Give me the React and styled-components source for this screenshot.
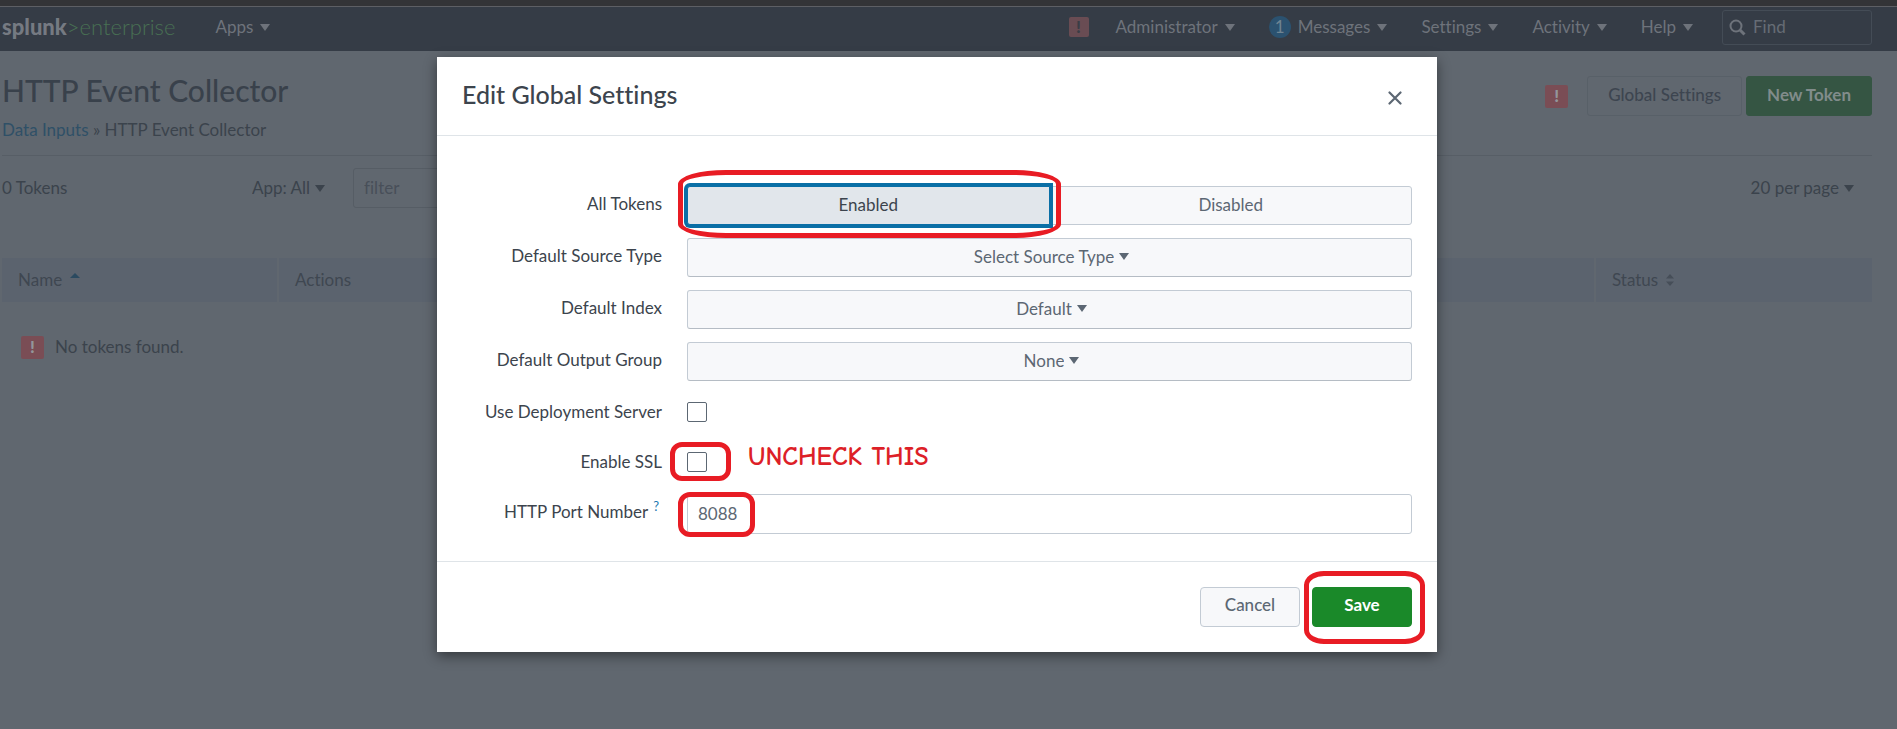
import React, { useState } from 'react';
import styled, { createGlobalStyle, css } from 'styled-components';

const GlobalStyle = createGlobalStyle`
  *, *::before, *::after { box-sizing: border-box; }
  html { background: #60676f; }
  body { margin: 0; }
  body, button, input, select {
    font-family: Lato, "Open Sans", "Liberation Sans", sans-serif;
    font-size: 17px;
    font-variant-ligatures: none;
    line-height: 24px;
  }
  button, select { cursor: pointer; }
`;

const Page = styled.div`
  position: relative;
  min-height: 100vh;
  color: #3b434c;
  background: #60676f;
`;

/* ---------- shared small parts ---------- */

const CaretSvg = styled.svg`
  display: block;
  flex: none;
  width: 10px;
  height: 7px;
  fill: currentColor;
  pointer-events: none;
`;

const Caret = () => (
  <CaretSvg viewBox="0 0 10 7" aria-hidden="true">
    <path d="M0 0h10L5 7z" />
  </CaretSvg>
);

const AlertIcon = styled.span`
  display: inline-flex;
  flex: none;
  align-items: center;
  justify-content: center;
  width: ${(p) => (p.$dim ? 20 : 23)}px;
  height: ${(p) => (p.$dim ? 20 : 23)}px;
  border-radius: 2px;
  font-size: 17px;
  font-weight: 900;
  color: ${(p) => (p.$dim ? '#3a3d46' : '#93969b')};
  background: ${(p) => (p.$dim ? '#694c53' : '#7a4d55')};
`;

const SelectBox = styled.label`
  display: flex;
  align-items: center;
  justify-content: center;
  gap: 5px;
  ${(p) =>
    p.$boxed &&
    css`
      height: 39px;
      padding: 0 0 2px 4px;
      border: 1px solid #c3cbd4;
      border-bottom-color: #b5bcc4;
      border-radius: 3px;
      color: #5c6773;
      background: #f7f8fa;
    `}
`;

const BareSelect = styled.select`
  appearance: none;
  field-sizing: content;
  padding: 0;
  border: 0;
  outline: 0;
  color: inherit;
  background: transparent;
`;

function Dropdown({ id, label, value, boxed }) {
  return (
    <SelectBox htmlFor={id} $boxed={boxed}>
      <BareSelect id={id} aria-label={label} defaultValue={value}>
        <option>{value}</option>
      </BareSelect>
      <Caret />
    </SelectBox>
  );
}

/* ---------- top navigation ---------- */

const TopStrip = styled.div`
  height: 7px;
  border-bottom: 1px solid #5d5f64;
  background: #333437;
`;

const NavBar = styled.nav`
  display: flex;
  align-items: center;
  justify-content: space-between;
  height: 44px;
  padding: 0 25px 4px 2px;
  color: #6e737b;
  background: #353c46;
`;

const NavGroup = styled.div`
  display: flex;
  align-items: center;
  gap: ${(p) => p.$gap}px;
`;

const Logo = styled.a`
  font-size: 22px;
  font-weight: 300;
  line-height: 28px;
  text-decoration: none;
  color: #487053;
`;

const LogoName = styled.span`
  font-weight: 900;
  color: #757a82;
`;

const NavButton = styled.button`
  display: flex;
  align-items: center;
  gap: 7px;
  padding: 0;
  border: 0;
  color: inherit;
  background: none;
`;

const CountBadge = styled.span`
  width: 22px;
  height: 22px;
  border-radius: 50%;
  line-height: 22px;
  text-align: center;
  color: #6f8492;
  background: #2b5270;
`;

const FindBox = styled.label`
  display: flex;
  align-items: center;
  gap: 7px;
  width: 150px;
  height: 35px;
  margin-left: -5px;
  padding: 0 6px;
  border: 1px solid #444c56;
  border-radius: 3px;
`;

const FindInput = styled.input`
  flex: 1;
  min-width: 0;
  padding: 0;
  border: 0;
  outline: 0;
  color: inherit;
  background: none;
  &::placeholder { color: #666c75; opacity: 1; }
`;

const SearchIcon = () => (
  <svg width="17" height="17" viewBox="0 0 17 17" fill="none" stroke="currentColor" aria-hidden="true">
    <circle cx="7" cy="7" r="5.5" strokeWidth="2" />
    <path d="M11 11l4.5 4.5" strokeWidth="3" />
  </svg>
);

const NavMenu = ({ children }) => (
  <NavButton type="button" aria-haspopup="menu">
    {children}
    <Caret />
  </NavButton>
);

/* ---------- page behind the dialog ---------- */

const Main = styled.main`
  padding: 25px 25px 0 2px;
`;

const PageHeader = styled.header`
  display: flex;
  align-items: flex-start;
  justify-content: space-between;
  height: 80px;
  border-bottom: 1px solid #575e66;
`;

const PageTitle = styled.h1`
  margin: -4px 0 10px;
  font-size: 30px;
  font-weight: 500;
  line-height: 36px;
  color: #39414b;
`;

const Breadcrumb = styled.div`
  a { color: #2f5067; text-decoration: none; }
`;

const HeaderActions = styled.div`
  display: flex;
  align-items: center;
  gap: 4px;
`;

const AlertSlot = styled.span`
  display: flex;
  padding-right: 15px;
`;

const PageButton = styled.button`
  height: 40px;
  padding: 0 20px 2px;
  border: 1px solid ${(p) => (p.$primary ? '#355543' : '#586068')};
  border-radius: 3px;
  font-weight: ${(p) => (p.$primary ? 700 : 500)};
  color: ${(p) => (p.$primary ? '#818c8b' : '#3d4550')};
  background: ${(p) => (p.$primary ? '#355543' : 'transparent')};
`;

const Toolbar = styled.div`
  display: flex;
  align-items: center;
  padding: 12px 18px 50px 0;
`;

const TokenCount = styled.span`
  width: 250px;
`;

const FilterInput = styled.input`
  width: 250px;
  height: 40px;
  margin: 0 auto 0 28px;
  padding: 0 10px 2px;
  border: 1px solid #565d65;
  border-radius: 3px;
  color: inherit;
  background: transparent;
  &::placeholder { color: #484f59; opacity: 1; }
`;

const TokenTable = styled.table`
  width: 100%;
  table-layout: fixed;
  border-collapse: collapse;
`;

const HeadCell = styled.th`
  width: ${(p) => (p.$width ? `${p.$width}px` : 'auto')};
  height: 44px;
  padding: 0 16px;
  border-left: 2px solid #60676f;
  font-weight: 400;
  text-align: left;
  color: #3f4751;
  background: #5b636e;
  &:first-child { border-left: 0; }
`;

const HeadLabel = styled.span`
  display: flex;
  align-items: center;
  gap: 8px;
`;

const EmptyCell = styled.td`
  height: 90px;
  padding: 0 19px;
`;

const EmptyMessage = styled.span`
  display: flex;
  align-items: center;
  gap: 11px;
`;

const SortedIcon = () => (
  <svg width="10" height="18" viewBox="0 0 10 18" fill="#2b4a60" aria-hidden="true">
    <path d="M0 7L5 2l5 5z" />
  </svg>
);

const SortableIcon = () => (
  <svg width="8" height="12" viewBox="0 0 8 12" fill="#464e58" aria-hidden="true">
    <path d="M0 4.5L4 0l4 4.5zM0 7.500h8L4 12z" />
  </svg>
);

/* ---------- dialog ---------- */

const Overlay = styled.div`
  position: absolute;
  inset: 0;
  padding: 57px 23px 0 0;
`;

const Dialog = styled.section`
  width: 100%;
  max-width: 1000px;
  margin: 0 auto;
  color: #3c444d;
  background: #fff;
  box-shadow: 0 4px 12px rgba(0, 0, 0, 0.45);
`;

const DialogHeader = styled.header`
  display: flex;
  align-items: center;
  justify-content: space-between;
  height: 79px;
  padding: 0 35px 4px 25px;
  border-bottom: 1px solid #dfe4e8;
`;

const DialogTitle = styled.h2`
  margin: 0;
  font-size: 25px;
  font-weight: 500;
  line-height: 32px;
`;

const CloseButton = styled.button`
  display: flex;
  margin-top: 7px;
  padding: 0;
  border: 0;
  color: #5c6773;
  background: none;
`;

const DialogBody = styled.div`
  display: flex;
  flex-direction: column;
  gap: 13px;
  padding: 50px 25px 27px;
`;

const Field = styled.div`
  display: grid;
  grid-template-columns: 200px 1fr;
  column-gap: 25px;
`;

const FieldLabel = styled.label`
  line-height: 35px;
  text-align: right;
`;

const HelpLink = styled.a`
  margin: 0 3px 0 5px;
  font-size: 13px;
  line-height: 1;
  vertical-align: super;
  text-decoration: none;
  color: #1e78b0;
`;

const ToggleGroup = styled.div`
  display: grid;
  grid-template-columns: 1fr 1fr;
`;

const ToggleButton = styled.button`
  width: 100%;
  height: 39px;
  padding: 0 0 2px;
  border: 1px solid #c3cbd4;
  color: #5c6773;
  background: #f7f8fa;
  border-radius: 0 3px 3px 0;
  ${(p) =>
    p.$active &&
    css`
      border-color: #0a6fa6;
      border-radius: 3px 0 0 3px;
      color: #3c444d;
      background: #e1e6eb;
      box-shadow: 0 0 0 3px #0a6fa6;
    `}
`;

const CheckRow = styled.div`
  display: flex;
  align-items: center;
  gap: 41px;
  height: 37px;
  padding-bottom: 1px;
`;

const Checkbox = styled.input`
  appearance: none;
  display: block;
  width: 20px;
  height: 20px;
  margin: 0;
  border: 1px solid #5c6773;
  border-radius: 2px;
  background: ${(p) => (p.checked ? '#5c6773' : '#fff')};
`;

const PortInput = styled.input`
  display: block;
  width: 100%;
  height: 40px;
  padding: 0 10px 2px;
  border: 1px solid #c3cbd4;
  border-radius: 3px;
  color: #5c6773;
  background: #fff;
`;

const DialogFooter = styled.footer`
  display: flex;
  justify-content: flex-end;
  gap: 12px;
  padding: 25px;
  border-top: 1px solid #dfe4e8;
`;

const DialogButton = styled.button`
  width: 100px;
  height: 40px;
  padding: 0 0 4px;
  border: 1px solid ${(p) => (p.$primary ? '#1a8929' : '#c3cbd4')};
  border-radius: 4px;
  font-weight: ${(p) => (p.$primary ? 700 : 500)};
  color: ${(p) => (p.$primary ? '#fff' : '#5c6773')};
  background: ${(p) => (p.$primary ? '#1a8929' : '#f7f8fa')};
`;

/* ---------- red mark-up over the dialog ---------- */

const Marked = styled.div`
  position: relative;
`;

const Ring = styled.span`
  position: absolute;
  z-index: 1;
  inset: ${(p) => p.$inset};
  width: ${(p) => p.$width || 'auto'};
  border: 5px solid #e81c24;
  border-radius: ${(p) => p.$radius || '12px'};
  pointer-events: none;
`;

const Note = styled.strong`
  padding-bottom: 10px;
  font-family: "Comic Sans MS", "Comic Neue", Lato, sans-serif;
  font-size: 26px;
  font-weight: 700;
  line-height: 28px;
  color: #dd1f28;
`;

export default function App() {
  const [enabled, setEnabled] = useState(true);
  const [deployment, setDeployment] = useState(false);
  const [ssl, setSsl] = useState(false);

  return (
    <Page>
      <GlobalStyle />
      <TopStrip />
      <NavBar>
        <NavGroup $gap={40}>
          <Logo href="#home">
            <LogoName>splunk</LogoName>&gt;enterprise
          </Logo>
          <NavMenu>Apps</NavMenu>
        </NavGroup>
        <NavGroup $gap={34}>
          <NavGroup $gap={27}>
            <AlertIcon $dim>!</AlertIcon>
            <NavMenu>Administrator</NavMenu>
          </NavGroup>
          <NavMenu>
            <CountBadge>1</CountBadge>
            Messages
          </NavMenu>
          <NavMenu>Settings</NavMenu>
          <NavMenu>Activity</NavMenu>
          <NavMenu>Help</NavMenu>
          <FindBox>
            <SearchIcon />
            <FindInput type="search" placeholder="Find" aria-label="Find" />
          </FindBox>
        </NavGroup>
      </NavBar>

      <Main>
        <PageHeader>
          <div>
            <PageTitle>HTTP Event Collector</PageTitle>
            <Breadcrumb>
              <a href="#inputs">Data Inputs</a> » HTTP Event Collector
            </Breadcrumb>
          </div>
          <HeaderActions>
            <AlertSlot>
              <AlertIcon>!</AlertIcon>
            </AlertSlot>
            <PageButton type="button">Global Settings</PageButton>
            <PageButton type="button" $primary>New Token</PageButton>
          </HeaderActions>
        </PageHeader>

        <Toolbar>
          <TokenCount>0 Tokens</TokenCount>
          <Dropdown id="app" label="App" value="App: All" />
          <FilterInput placeholder="filter" aria-label="filter" />
          <Dropdown id="per-page" label="Rows per page" value="20 per page" />
        </Toolbar>

        <TokenTable>
          <thead>
            <tr>
              <HeadCell $width={276}>
                <HeadLabel>Name <SortedIcon /></HeadLabel>
              </HeadCell>
              <HeadCell>Actions</HeadCell>
              <HeadCell $width={277}>
                <HeadLabel>Status <SortableIcon /></HeadLabel>
              </HeadCell>
            </tr>
          </thead>
          <tbody>
            <tr>
              <EmptyCell colSpan={3}>
                <EmptyMessage>
                  <AlertIcon>!</AlertIcon>
                  No tokens found.
                </EmptyMessage>
              </EmptyCell>
            </tr>
          </tbody>
        </TokenTable>
      </Main>

      <Overlay>
        <Dialog role="dialog" aria-labelledby="dialog-title">
          <DialogHeader>
            <DialogTitle id="dialog-title">Edit Global Settings</DialogTitle>
            <CloseButton type="button" aria-label="Close">
              <svg width="14" height="14" viewBox="0 0 14 14" stroke="currentColor" strokeWidth="2.2" strokeLinecap="round">
                <path d="M1.500 1.500l11 11M12.500 1.500l-11 11" />
              </svg>
            </CloseButton>
          </DialogHeader>

          <DialogBody>
            <Field>
              <FieldLabel as="span" id="all-tokens">All Tokens</FieldLabel>
              <ToggleGroup role="group" aria-labelledby="all-tokens">
                <Marked>
                  <ToggleButton type="button" aria-pressed={enabled} $active={enabled} onClick={() => setEnabled(true)}>
                    Enabled
                  </ToggleButton>
                  <Ring $inset="-16px -11px -13px -9px" $radius="48px / 14px" />
                </Marked>
                <ToggleButton type="button" aria-pressed={!enabled} $active={!enabled} onClick={() => setEnabled(false)}>
                  Disabled
                </ToggleButton>
              </ToggleGroup>
            </Field>
            <Field>
              <FieldLabel htmlFor="source-type">Default Source Type</FieldLabel>
              <Dropdown boxed id="source-type" value="Select Source Type" />
            </Field>
            <Field>
              <FieldLabel htmlFor="index">Default Index</FieldLabel>
              <Dropdown boxed id="index" value="Default" />
            </Field>
            <Field>
              <FieldLabel htmlFor="output-group">Default Output Group</FieldLabel>
              <Dropdown boxed id="output-group" value="None" />
            </Field>
            <Field>
              <FieldLabel htmlFor="deployment">Use Deployment Server</FieldLabel>
              <CheckRow>
                <Checkbox id="deployment" type="checkbox" checked={deployment} onChange={(e) => setDeployment(e.target.checked)} />
              </CheckRow>
            </Field>
            <Field>
              <FieldLabel htmlFor="ssl">Enable SSL</FieldLabel>
              <CheckRow>
                <Marked>
                  <Checkbox id="ssl" type="checkbox" checked={ssl} onChange={(e) => setSsl(e.target.checked)} />
                  <Ring $inset="-10px -24px -9px -17px" />
                </Marked>
                <Note>UNCHECK THIS</Note>
              </CheckRow>
            </Field>
            <Field>
              <FieldLabel htmlFor="port">
                HTTP Port Number
                <HelpLink href="#port-help" aria-label="Help on the port number">?</HelpLink>
              </FieldLabel>
              <Marked>
                <PortInput id="port" type="text" inputMode="numeric" defaultValue="8088" />
                <Ring $inset="-2px auto -3px -9px" $width="77px" />
              </Marked>
            </Field>
          </DialogBody>

          <DialogFooter>
            <DialogButton type="button">Cancel</DialogButton>
            <Marked>
              <DialogButton type="button" $primary>Save</DialogButton>
              <Ring $inset="-16px -13px -17px -8px" $radius="20px / 14px" />
            </Marked>
          </DialogFooter>
        </Dialog>
      </Overlay>
    </Page>
  );
}
